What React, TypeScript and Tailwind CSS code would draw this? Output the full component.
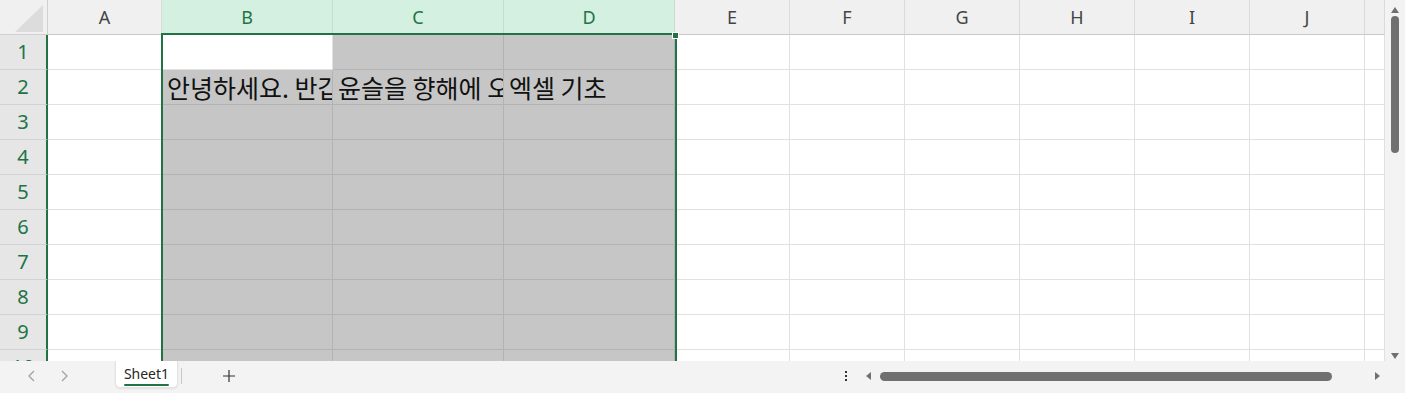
import React from 'react';

interface Col {
  key: string;
  width: string;
  selected: boolean;
}

const COLS: Col[] = [
  { key: 'A', width: 'w-[114px]', selected: false },
  { key: 'B', width: 'w-[171px]', selected: true },
  { key: 'C', width: 'w-[171px]', selected: true },
  { key: 'D', width: 'w-[171px]', selected: true },
  { key: 'E', width: 'w-[115px]', selected: false },
  { key: 'F', width: 'w-[115px]', selected: false },
  { key: 'G', width: 'w-[115px]', selected: false },
  { key: 'H', width: 'w-[115px]', selected: false },
  { key: 'I', width: 'w-[115px]', selected: false },
  { key: 'J', width: 'w-[115px]', selected: false },
  { key: '', width: 'w-[20px]', selected: false },
];

const ROWS = [1, 2, 3, 4, 5, 6, 7, 8, 9, 10];

// row 2 contents, keyed by column
const CELLS: Record<string, string> = {
  B: '안녕하세요. 반갑습니다.',
  C: '윤슬을 향해에 오신 것을 환영합니다',
  D: '엑셀 기초',
};

const korean = "font-['Noto_Sans_CJK_KR','Noto_Sans',sans-serif]";

function CornerTriangle() {
  return (
    <svg width="46" height="34" viewBox="0 0 46 34" className="block">
      <polygon points="43,5 43,32 15,32" fill="#dcdcdc" />
    </svg>
  );
}

function HeaderRow() {
  return (
    <div className="flex h-[35px] shrink-0">
      <div className="w-[48px] h-full bg-[#f0f0f0] border-r border-b border-[#d0d0d0]">
        <CornerTriangle />
      </div>
      {COLS.map((c, i) => (
        <div
          key={i}
          className={
            'h-full flex items-center justify-center border-r border-b text-[18px] ' +
            c.width +
            ' ' +
            (c.selected
              ? 'bg-[#d3f0e0] text-[#217346] border-r-[#c3dfcf] border-b-[#217346]'
              : 'bg-[#f0f0f0] text-[#444444] border-r-[#dadada] border-b-[#c8c8c8]')
          }
        >
          {c.key}
        </div>
      ))}
    </div>
  );
}

function DataRow({ n }: { n: number }) {
  return (
    <div className="flex h-[35px] shrink-0">
      <div className="w-[48px] h-full flex items-center justify-center bg-[#e6e6e6] border-r-2 border-r-[#217346] border-b border-b-[#d2d2d2] text-[20px] text-[#217346]">
        {n}
      </div>
      {COLS.map((c, i) => {
        const isActive = c.key === 'B' && n === 1;
        const shaded = c.selected && !isActive;
        const text = n === 2 ? CELLS[c.key] : undefined;
        return (
          <div
            key={i}
            className={
              'h-full overflow-hidden whitespace-nowrap flex items-center border-r border-b ' +
              c.width +
              ' ' +
              (shaded ? 'bg-[#c6c6c6] border-[#b3b3b3]' : 'bg-white border-[#e1e1e1]')
            }
          >
            {text && (
              <span className={'pl-[5px] pt-[1px] text-[25px] leading-none text-[#111111] ' + korean}>
                {text}
              </span>
            )}
          </div>
        );
      })}
    </div>
  );
}

function VerticalScrollbar() {
  return (
    <div className="w-[20px] h-full bg-[#f3f3f3] flex flex-col items-center">
      <svg width="10" height="8" viewBox="0 0 10 8" className="mt-[6px]">
        <polygon points="5,1 9,7 1,7" fill="#707070" />
      </svg>
      <div className="mt-[2px] w-[8px] h-[137px] rounded-full bg-[#707070]" />
      <div className="flex-1" />
      <svg width="10" height="8" viewBox="0 0 10 8" className="mb-[1px]">
        <polygon points="1,1 9,1 5,7" fill="#707070" />
      </svg>
    </div>
  );
}

function BottomBar() {
  return (
    <div className="h-[32px] shrink-0 flex items-start bg-[#f3f3f3] text-[#333333] font-['Noto_Sans',sans-serif]">
      <svg width="10" height="12" viewBox="0 0 10 12" className="ml-[27px] mt-[9px]">
        <path d="M7 1 L2 6 L7 11" stroke="#a0a0a0" strokeWidth="1.3" fill="none" />
      </svg>
      <svg width="10" height="12" viewBox="0 0 10 12" className="ml-[22px] mt-[9px]">
        <path d="M3 1 L8 6 L3 11" stroke="#a0a0a0" strokeWidth="1.3" fill="none" />
      </svg>
      <div className="ml-[46px] w-[63px] h-[27px] bg-white rounded-b-[5px] border border-t-0 border-[#e2e2e2] shadow-[0_1px_2px_rgba(0,0,0,0.08)] flex flex-col items-center">
        <span className="text-[14px] leading-none mt-[6px] text-[#262626]">Sheet1</span>
        <div className="mt-[3px] w-[45px] h-[2px] rounded-full bg-[#217346]" />
      </div>
      <div className="ml-[3px] mt-[7px] w-px h-[16px] bg-[#c8c8c8]" />
      <svg width="14" height="14" viewBox="0 0 14 14" className="ml-[40px] mt-[8px]">
        <path d="M7 1 V13 M1 7 H13" stroke="#333333" strokeWidth="1.2" />
      </svg>
      <div className="ml-[609px] mt-[10px] flex flex-col gap-[2px]">
        <div className="w-[2px] h-[2px] bg-[#333333]" />
        <div className="w-[2px] h-[2px] bg-[#333333]" />
        <div className="w-[2px] h-[2px] bg-[#333333]" />
      </div>
      <svg width="8" height="10" viewBox="0 0 8 10" className="ml-[17px] mt-[10px]">
        <polygon points="7,1 7,9 2,5" fill="#707070" />
      </svg>
      <div className="ml-[8px] mt-[11px] w-[452px] h-[9px] rounded-full bg-[#707070]" />
      <svg width="8" height="10" viewBox="0 0 8 10" className="ml-[42px] mt-[10px]">
        <polygon points="1,1 1,9 6,5" fill="#707070" />
      </svg>
    </div>
  );
}

export default function App() {
  return (
    <div className="w-[1405px] h-[393px] flex flex-col overflow-hidden bg-[#f3f3f3] font-['Noto_Sans',sans-serif]">
      <div className="flex h-[361px] shrink-0">
        <div className="relative w-[1385px] h-full overflow-hidden bg-white flex flex-col">
          <HeaderRow />
          {ROWS.map((n) => (
            <DataRow key={n} n={n} />
          ))}
          {/* selection outline over B:D */}
          <div className="absolute left-[161px] top-[33px] w-[516px] h-[400px] border-2 border-[#217346] pointer-events-none" />
          <div className="absolute left-[672px] top-[32px] w-[7px] h-[7px] bg-[#217346] border border-white" />
        </div>
        <VerticalScrollbar />
      </div>
      <BottomBar />
    </div>
  );
}
